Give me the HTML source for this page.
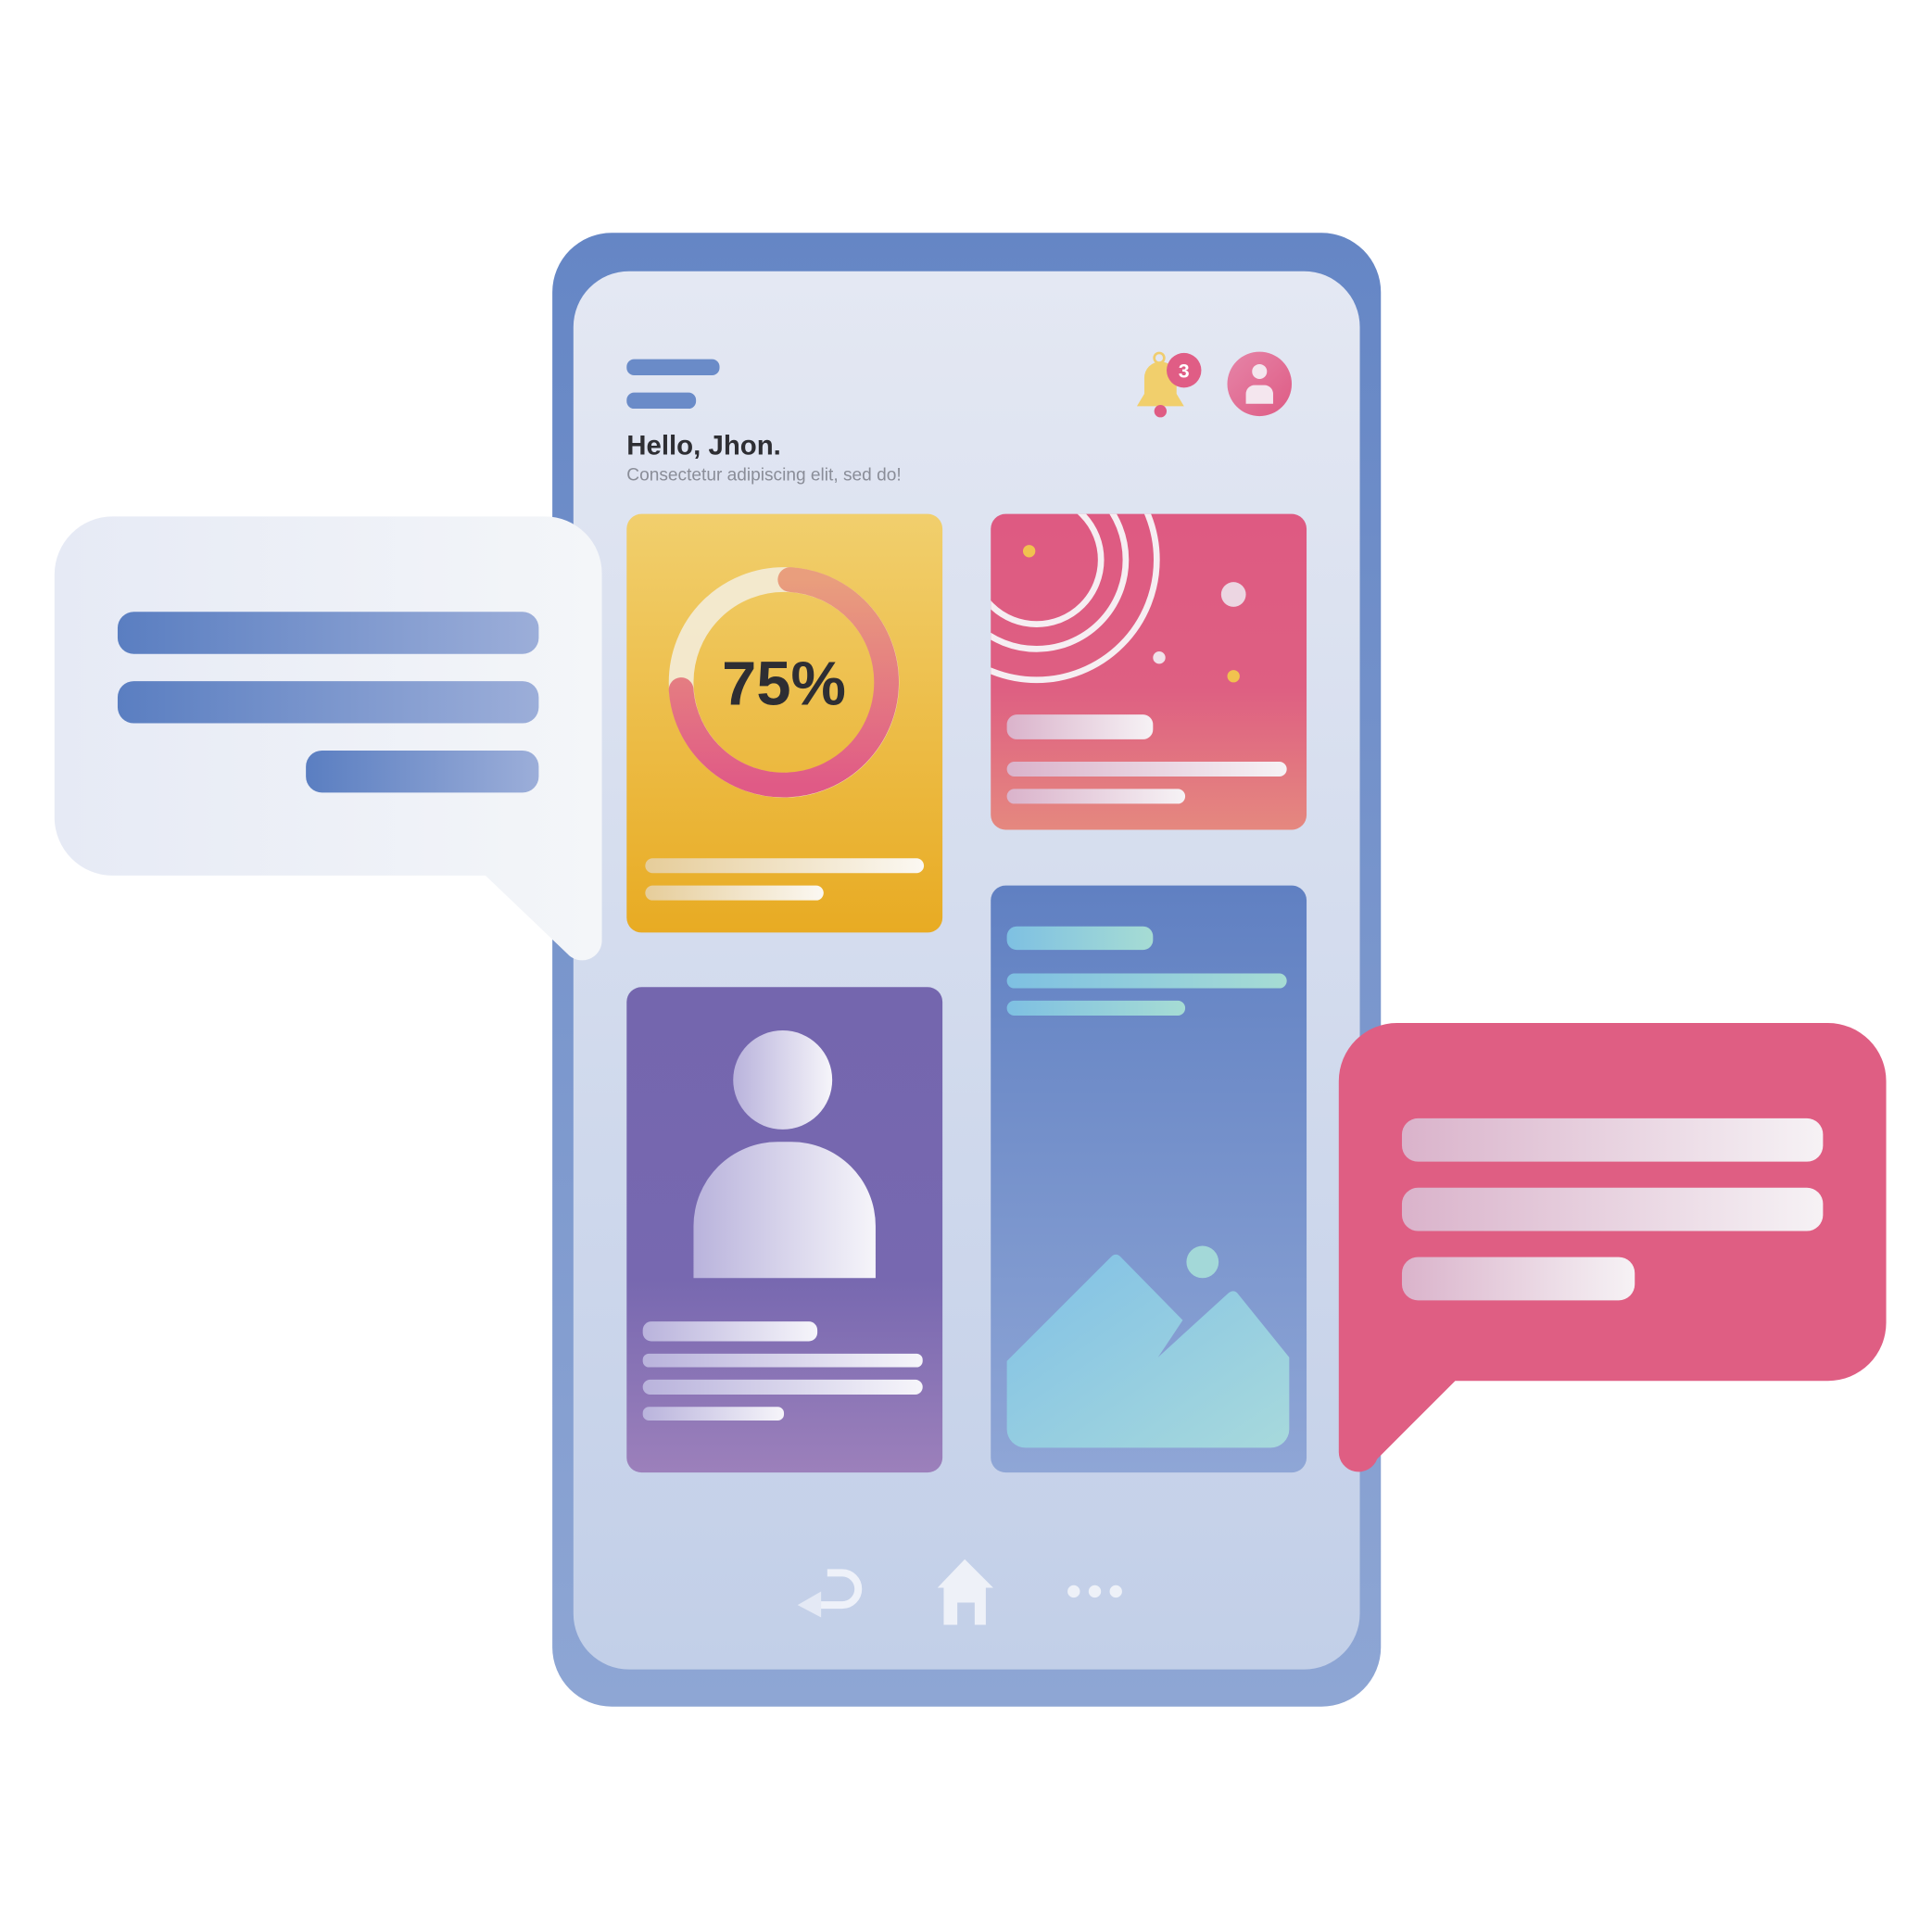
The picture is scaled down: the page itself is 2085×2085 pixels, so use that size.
<!DOCTYPE html>
<html><head><meta charset="utf-8"><style>html,body{margin:0;padding:0;background:#fff}svg{display:block}</style></head><body>
<svg width="2085" height="2085" viewBox="0 0 1560 1560" xmlns="http://www.w3.org/2000/svg">
<defs>
<linearGradient id="ph" x1="0" y1="0" x2="0" y2="1"><stop offset="0" stop-color="#6586c5"/><stop offset="1" stop-color="#8ea6d4"/></linearGradient>
<linearGradient id="sc" x1="0" y1="0" x2="0" y2="1"><stop offset="0" stop-color="#e4e8f3"/><stop offset="1" stop-color="#c2cfe8"/></linearGradient>
<linearGradient id="yl" x1="0" y1="0" x2="0" y2="1"><stop offset="0" stop-color="#f1cf6d"/><stop offset="1" stop-color="#e8ab23"/></linearGradient>
<linearGradient id="pk" x1="0" y1="0" x2="0" y2="1"><stop offset="0" stop-color="#de5a82"/><stop offset="0.55" stop-color="#de5f82"/><stop offset="1" stop-color="#e5887f"/></linearGradient>
<linearGradient id="pu" x1="0" y1="0" x2="0" y2="1"><stop offset="0" stop-color="#7466ae"/><stop offset="0.6" stop-color="#7768b0"/><stop offset="1" stop-color="#9c80bb"/></linearGradient>
<linearGradient id="bl" x1="0" y1="0" x2="0" y2="1"><stop offset="0" stop-color="#6080c2"/><stop offset="1" stop-color="#8fa6d6"/></linearGradient>
<linearGradient id="wb" x1="0" y1="0" x2="1" y2="0"><stop offset="0" stop-color="#dab3cb"/><stop offset="1" stop-color="#f6f2f5"/></linearGradient>
<linearGradient id="wy" x1="0" y1="0" x2="1" y2="0"><stop offset="0" stop-color="#e6cd9a"/><stop offset="1" stop-color="#fbf8f2"/></linearGradient>
<linearGradient id="wp" x1="0" y1="0" x2="1" y2="0"><stop offset="0" stop-color="#b9b3dc"/><stop offset="1" stop-color="#f6f5fa"/></linearGradient>
<linearGradient id="tl" x1="0" y1="0" x2="1" y2="0"><stop offset="0" stop-color="#7ec0e2"/><stop offset="1" stop-color="#a6dcd4"/></linearGradient>
<linearGradient id="mt" x1="0" y1="0" x2="1" y2="1"><stop offset="0" stop-color="#80c0e6"/><stop offset="1" stop-color="#a7d9dc"/></linearGradient>
<linearGradient id="bb" x1="0" y1="0" x2="1" y2="0"><stop offset="0" stop-color="#5a7ec1"/><stop offset="1" stop-color="#9caed9"/></linearGradient>
<linearGradient id="lb" x1="0" y1="0" x2="1" y2="0"><stop offset="0" stop-color="#e6eaf5"/><stop offset="1" stop-color="#f4f6f9"/></linearGradient>
<linearGradient id="rg" x1="0" y1="0" x2="0" y2="1"><stop offset="0" stop-color="#e99e7d"/><stop offset="1" stop-color="#e05a86"/></linearGradient>
<linearGradient id="av" x1="0" y1="0" x2="1" y2="1"><stop offset="0" stop-color="#e685a8"/><stop offset="1" stop-color="#de5b84"/></linearGradient>
<clipPath id="pc"><rect x="800" y="415" width="255" height="255" rx="12"/></clipPath>
</defs>
<rect x="446" y="188" width="669" height="1190" rx="48" fill="url(#ph)"/>
<rect x="463" y="219" width="635" height="1129" rx="45" fill="url(#sc)"/>
<rect x="506" y="290" width="75" height="13" rx="6" fill="#6a8bc8"/>
<rect x="506" y="317" width="56" height="13" rx="6" fill="#6a8bc8"/>
<text x="506" y="367" font-family="Liberation Sans, sans-serif" font-size="22" font-weight="bold" fill="#2e2e33">Hello, Jhon.</text>
<text x="506" y="388" font-family="Liberation Sans, sans-serif" font-size="14.3" fill="#8a8d98">Consectetur adipiscing elit, sed do!</text>
<circle cx="936" cy="289" r="4" fill="none" stroke="#f0cd6f" stroke-width="2"/>
<path d="M924 318 V305 a13 13 0 0 1 26 0 V318 l6 10 h-38 z" fill="#f1cf6c"/>
<circle cx="937" cy="332" r="5" fill="#df5b83"/>
<circle cx="956" cy="299" r="14" fill="#e05d85"/>
<text x="956" y="305" text-anchor="middle" font-family="Liberation Sans, sans-serif" font-size="16" font-weight="bold" fill="#fff">3</text>
<circle cx="1017" cy="310" r="26" fill="url(#av)"/>
<circle cx="1017" cy="300" r="6" fill="#f4e6ee"/>
<path d="M1006 326 v-8 a7 7 0 0 1 7-7 h8 a7 7 0 0 1 7 7 v8 z" fill="#f4e6ee"/>
<rect x="506" y="415" width="255" height="338" rx="12" fill="url(#yl)"/>
<circle cx="633" cy="551" r="83" fill="none" stroke="#f3ecd9" stroke-width="20" opacity="0.9"/>
<path d="M638 468 A83 83 0 1 1 550 557" fill="none" stroke="url(#rg)" stroke-width="20" stroke-linecap="round"/>
<text x="633" y="569" text-anchor="middle" font-family="Liberation Sans, sans-serif" font-size="50" font-weight="bold" fill="#2e2e33">75%</text>
<rect x="521" y="693" width="225" height="12" rx="6" fill="url(#wy)"/>
<rect x="521" y="715" width="144" height="12" rx="6" fill="url(#wy)"/>
<rect x="800" y="415" width="255" height="255" rx="12" fill="url(#pk)"/>
<g clip-path="url(#pc)" fill="none" stroke="#f6eef2" stroke-width="5">
<circle cx="837" cy="452" r="52"/><circle cx="837" cy="452" r="72"/><circle cx="837" cy="452" r="97"/>
</g>
<circle cx="831" cy="445" r="5" fill="#f1c24f"/>
<circle cx="996" cy="480" r="10" fill="#ecd6e2"/>
<circle cx="936" cy="531" r="5" fill="#f1e1ea"/>
<circle cx="996" cy="546" r="5" fill="#f1c24f"/>
<rect x="813" y="577" width="118" height="20" rx="8" fill="url(#wb)"/>
<rect x="813" y="615" width="226" height="12" rx="6" fill="url(#wb)"/>
<rect x="813" y="637" width="144" height="12" rx="6" fill="url(#wb)"/>
<rect x="506" y="797" width="255" height="392" rx="12" fill="url(#pu)"/>
<circle cx="632" cy="872" r="40" fill="url(#wp)"/>
<path d="M560 1032 V990 a68 68 0 0 1 68-68 h11 a68 68 0 0 1 68 68 V1032 z" fill="url(#wp)"/>
<rect x="519" y="1067" width="141" height="16" rx="7" fill="url(#wp)"/>
<rect x="519" y="1093" width="226" height="11" rx="5" fill="url(#wp)"/>
<rect x="519" y="1114" width="226" height="12" rx="6" fill="url(#wp)"/>
<rect x="519" y="1136" width="114" height="11" rx="5" fill="url(#wp)"/>
<rect x="800" y="715" width="255" height="474" rx="12" fill="url(#bl)"/>
<rect x="813" y="748" width="118" height="19" rx="8" fill="url(#tl)"/>
<rect x="813" y="786" width="226" height="12" rx="6" fill="url(#tl)"/>
<rect x="813" y="808" width="144" height="12" rx="6" fill="url(#tl)"/>
<circle cx="971" cy="1019" r="13" fill="#a3d8d8"/>
<path d="M813 1099 L897 1015 q4-4 8 0 L955 1066 L935 1096 L992 1044 q4-3 7 0 L1041 1096 V1154 a15 15 0 0 1-15 15 H828 a15 15 0 0 1-15-15 z" fill="url(#mt)"/>
<path d="M668 1270 h12 a13 13 0 0 1 0 26 h-18" fill="none" stroke="#eef1f9" stroke-width="6"/>
<path d="M644 1296 l19-11 v21 z" fill="#e4e9f5"/>
<path d="M757 1282 L779 1259 L802 1282 h-6 v30 h-9 v-18 h-14 v18 h-11 v-30 z" fill="#eef1f8"/>
<circle cx="867" cy="1285" r="5" fill="#eef1f8"/><circle cx="884" cy="1285" r="5" fill="#eef1f8"/><circle cx="901" cy="1285" r="5" fill="#eef1f8"/>
<path d="M91 417 H440 a46 46 0 0 1 46 46 V760 a16 16 0 0 1-28 10 L392 707 H91 a47 47 0 0 1-47-47 V464 a47 47 0 0 1 47-47 z" fill="url(#lb)"/>
<rect x="95" y="494" width="340" height="34" rx="13" fill="url(#bb)"/>
<rect x="95" y="550" width="340" height="34" rx="13" fill="url(#bb)"/>
<rect x="247" y="606" width="188" height="34" rx="13" fill="url(#bb)"/>
<path d="M1128 826 H1476 a47 47 0 0 1 47 47 V1068 a47 47 0 0 1-47 47 H1175 L1112 1178 a16 16 0 0 1-31-6 V873 a47 47 0 0 1 47-47 z" fill="#df5e83"/>
<rect x="1132" y="903" width="340" height="35" rx="13" fill="url(#wb)"/>
<rect x="1132" y="959" width="340" height="35" rx="13" fill="url(#wb)"/>
<rect x="1132" y="1015" width="188" height="35" rx="13" fill="url(#wb)"/>
</svg>
</body></html>
